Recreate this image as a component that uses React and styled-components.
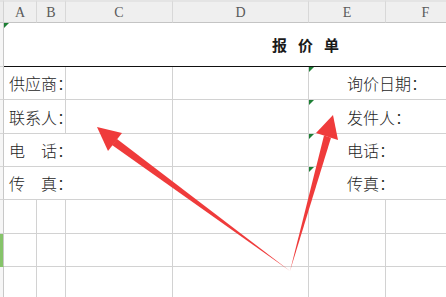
import React from "react";
import styled, { createGlobalStyle } from "styled-components";

const GlobalStyle = createGlobalStyle`
  html, body { margin: 0; padding: 0; background: #ffffff; overflow: hidden; }
  * { box-sizing: border-box; }
`;

const Sheet = styled.div`
  position: relative;
  width: 446px;
  height: 297px;
  overflow: hidden;
  display: grid;
  grid-template-columns: 4px 33px 29px 107px 136px 77px 80px;
  grid-template-rows: 23px 44px 33px 34px 33px 33px 34px 33px 40px;
  font-family: "Noto Sans CJK SC", "Noto Sans", sans-serif;
  color: #222;
`;

const Corner = styled.div`
  background: #ececec;
  border-top: 2px solid #e2e2e2;
  border-right: 1px solid #d2d2d2;
  border-bottom: 1px solid #c4c4c4;
`;

const ColHead = styled.div`
  background: #efefef;
  border-top: 2px solid #e4e4e4;
  border-right: 1px solid #d8d8d8;
  border-bottom: 1px solid #c4c4c4;
  display: flex;
  align-items: center;
  justify-content: center;
  font-family: "Liberation Serif", "DejaVu Serif", serif;
  font-size: 14px;
  color: #5a5a5a;
  padding-top: 1px;
`;

const RowHead = styled.div`
  background: ${(p) => (p.$active ? "#86c46a" : "#f6f6f6")};
  border-right: 1px solid #c8c8c8;
  border-bottom: 1px solid ${(p) => (p.$active ? "#86c46a" : "#d6d6d6")};
`;

const Cell = styled.div`
  position: relative;
  grid-column: span ${(p) => p.$span || 1};
  border-right: 1px solid ${(p) => (p.$noRight ? "transparent" : "#d2d2d2")};
  border-bottom: 1px solid #d2d2d2;
  background: #ffffff;
`;

const TitleCell = styled(Cell)`
  border-bottom: 1px solid #111;
  border-right: none;
  display: flex;
  align-items: center;
  padding-left: 268px;
  font-size: 15px;
  font-weight: 700;
  letter-spacing: 11px;
  color: #1a1a1a;
`;

const Label = styled(Cell)`
  display: flex;
  align-items: center;
  padding-left: 5px;
  font-size: 16px;
  font-weight: 300;
  color: #1e1e1e;
  white-space: pre;
`;

const RightLabel = styled(Label)`
  padding-left: 38px;
  border-right: none;
`;

const Marker = styled.span`
  position: absolute;
  left: 0;
  top: 0;
  width: 0;
  height: 0;
  border-top: 5px solid #1d7f35;
  border-right: 5px solid transparent;
`;

const Overlay = styled.svg`
  position: absolute;
  left: 0;
  top: 0;
  pointer-events: none;
`;

const cols = ["A", "B", "C", "D", "E", "F"];

const leftRows = [
  { left: "供应商：", span: 2, right: "询价日期：" },
  { left: "联系人：", span: 2, right: "发件人：" },
  { left: "电　话：", span: 3, right: "电话：" },
  { left: "传　真：", span: 3, right: "传真：" },
];

export default function App() {
  return (
    <>
      <GlobalStyle />
      <Sheet>
        <Corner />
        {cols.map((c) => (
          <ColHead key={c}>{c}</ColHead>
        ))}

        <RowHead />
        <TitleCell $span={6}>
          <Marker />
          报价单
        </TitleCell>

        {leftRows.map((r, i) => (
          <React.Fragment key={i}>
            <RowHead />
            <Label $span={r.span}>{r.left}</Label>
            {r.span === 2 && <Cell />}
            <Cell />
            <RightLabel $span={2}>
              <Marker />
              {r.right}
            </RightLabel>
          </React.Fragment>
        ))}

        {[0, 1, 2].map((i) => (
          <React.Fragment key={"e" + i}>
            <RowHead $active={i === 1} />
            {cols.map((c) => (
              <Cell key={c} />
            ))}
          </React.Fragment>
        ))}

        <Overlay width="446" height="297" viewBox="0 0 446 297">
          <g fill="#ef3b3b">
            <polygon points="97,127 122,133 108,151" />
            <polygon points="117,139 112,145 290,271" />
            <polygon points="333,115 316,133 338,140" />
            <polygon points="324,135.5 331,137.8 290,271" />
          </g>
        </Overlay>
      </Sheet>
    </>
  );
}
